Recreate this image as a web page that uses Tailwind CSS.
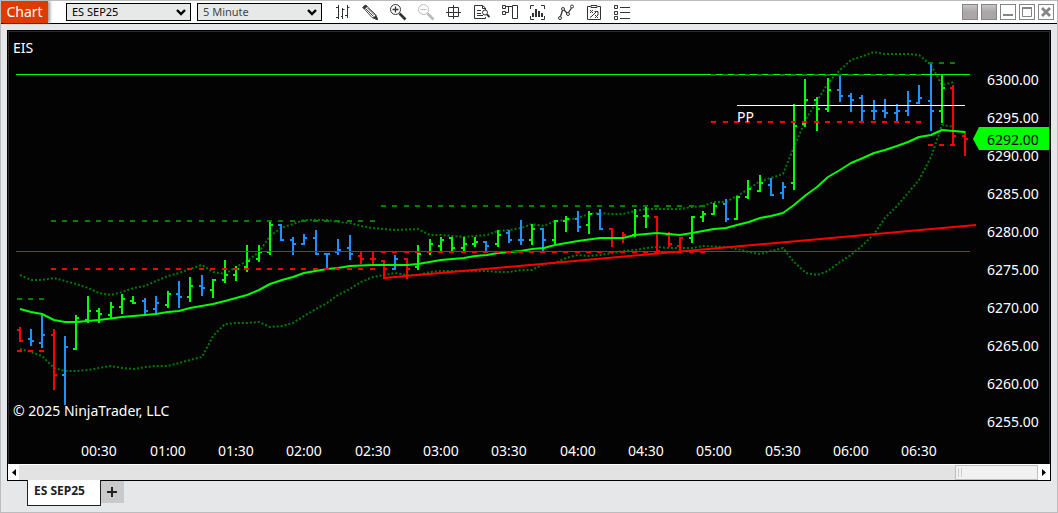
<!DOCTYPE html>
<html lang="en">
<head>
  <meta charset="UTF-8">
  <title>Chart - ES SEP25</title>
  <script src="https://cdn.jsdelivr.net/npm/@tailwindcss/browser@4"></script>
</head>
<body class="h-screen flex flex-col bg-[#e6e7e8] border border-[#bcbcbe] font-['Noto_Sans','Open_Sans',sans-serif] text-black overflow-hidden">

  <!-- Toolbar -->
  <header class="h-[23px] shrink-0 flex items-center bg-white border-b border-black pr-[3px]">
    <h1 class="h-full w-[47px] flex items-center justify-center bg-[#de3b00] text-white text-[14px] leading-none shadow-[2px_0_3px_#999]">Chart</h1>

    <div class="relative ml-[18px] w-[125px]">
      <select aria-label="Instrument" class="block appearance-none w-full h-[18px] pl-[5px] border border-black bg-[#e7e9e8] text-[11px] leading-4">
        <option>ES SEP25</option>
      </select>
      <svg class="absolute right-[5px] top-[6px] w-[10px] h-[7px] pointer-events-none" viewBox="0 0 10 7" fill="none" stroke="#000" stroke-width="2.4"><path d="M1 1l4 4 4-4"/></svg>
    </div>
    <div class="relative ml-[6px] w-[125px]">
      <select aria-label="Interval" class="block appearance-none w-full h-[18px] pl-[5px] border border-black bg-[#e7e9e8] text-[#444] text-[11px] leading-4">
        <option>5 Minute</option>
      </select>
      <svg class="absolute right-[5px] top-[6px] w-[10px] h-[7px] pointer-events-none" viewBox="0 0 10 7" fill="none" stroke="#000" stroke-width="2.4"><path d="M1 1l4 4 4-4"/></svg>
    </div>

    <nav class="ml-[11px] flex gap-[10px] text-[#333]">
      <button aria-label="Bar style">
        <svg class="size-[18px]" viewBox="0 0 18 18" fill="none" stroke="currentColor"><path d="M5.500 2v14M3 4.500h2M3 14.500h2M9.500 5v11M8 13.500h1M9.500 6.500h2M14.500 2v13M12 12.500h2M14.500 4.500h2"/></svg>
      </button>
      <button aria-label="Drawing tools">
        <svg class="size-[18px]" viewBox="0 0 18 18" fill="none" stroke="currentColor"><path d="M2 4.500L4.500 2l9.500 9 2.500 5.500-5.500-2zM5 6l7.500 7.500M6.500 5l7 7" stroke-width=".9"/><path d="M2 4.500L4.500 2l1.500 1.500L3.500 6zM12.500 15l4 1.500-1.500-4z" fill="currentColor"/></svg>
      </button>
      <button aria-label="Zoom in">
        <svg class="size-[18px]" viewBox="0 0 18 18" fill="none" stroke="currentColor"><circle cx="6.500" cy="6.500" r="5"/><path d="M3.500 6.500h6M6.500 3.500v6" stroke-width="1.300"/><path d="M10.500 10.500l6 6" stroke-width="2.600"/></svg>
      </button>
      <button aria-label="Zoom out" class="text-[#bbb]" disabled>
        <svg class="size-[18px]" viewBox="0 0 18 18" fill="none" stroke="currentColor"><circle cx="6.500" cy="6.500" r="5"/><path d="M3.500 6.500h6"/><path d="M10.500 10.500l6 6" stroke-width="2.600"/></svg>
      </button>
      <button aria-label="Crosshair">
        <svg class="size-[18px]" viewBox="0 0 18 18" fill="none" stroke="currentColor"><path d="M8.500 2v14M1 9.500h15M3.500 4.500h10v9h-10z"/></svg>
      </button>
      <button aria-label="Data box">
        <svg class="size-[18px]" viewBox="0 0 18 18" fill="none" stroke="currentColor"><path d="M12.500 7V5L9.500 2.500h-8v13h11v-1.500M9.500 2.500v3h3M4 7.500h4M4 10.500h4M4 12.500h6"/><circle cx="12" cy="9.500" r="2.500"/><path d="M14 11.500l2.500 2.500" stroke-width="1.800"/></svg>
      </button>
      <button aria-label="Chart trader">
        <svg class="size-[18px]" viewBox="0 0 18 18" fill="none" stroke="currentColor"><path d="M1.500 2.500h3v3h-3zM1.500 8.500h3v3h-3zM11.500 2.500h5v13h-5zM4.500 3.500h7M4.500 9.500h3v-6"/></svg>
      </button>
      <button aria-label="Indicators">
        <svg class="size-[18px]" viewBox="0 0 18 18" fill="none" stroke="currentColor"><path d="M5 2.500H1.500V6M12 2.500h3.500V6M5 16.500H1.500V13M12 16.500h3.500V13"/><path d="M4 14v-4M7 14V6M10 14V8M13 14v-4" stroke-width="2"/></svg>
      </button>
      <button aria-label="Strategies">
        <svg class="size-[18px]" viewBox="0 0 18 18" fill="none" stroke="currentColor"><circle cx="3" cy="15" r="1.500"/><circle cx="6" cy="6" r="1.500"/><circle cx="11" cy="11" r="1.500"/><circle cx="15" cy="3.500" r="1.500"/><path d="M3.500 13.500L5.500 7.500M7 7l3 3M11.500 9.500l3-4.500" stroke-width="1.300"/></svg>
      </button>
      <button aria-label="Strategy analyzer">
        <svg class="size-[18px]" viewBox="0 0 18 18" fill="none" stroke="currentColor"><path d="M5.500 3.500h-3v13h13v-13h-3M6 2.500h6v2H6z"/><path d="M5 7l3 3M8 7l-3 3M10 12l3 3M13 12l-3 3M5 14.500l2-1.500 4-4M9.500 8.500H13V12"/></svg>
      </button>
      <button aria-label="Properties">
        <svg class="size-[18px]" viewBox="0 0 18 18" fill="none" stroke="currentColor"><path d="M1.500 2.500h3v3h-3zM1.500 8.500h3v3h-3zM1.500 13.500h3v3h-3zM7 4.500h10M7 9.500h10M7 15.500h10"/></svg>
      </button>
    </nav>

    <div class="ml-auto flex gap-[3px]">
      <button aria-label="Link instrument" class="size-4 border border-[#858585] bg-linear-to-b from-[#c8c5c6] to-[#aaa6a7] to-50%"></button>
      <button aria-label="Link interval" class="size-4 border border-[#858585] bg-linear-to-b from-[#c8c5c6] to-[#aaa6a7] to-50%"></button>
      <button aria-label="Minimize" class="size-4 border border-[#858585]">
        <svg class="size-[14px]" viewBox="0 0 14 14"><path d="M2 9h10v2H2z" fill="#858585"/></svg>
      </button>
      <button aria-label="Maximize" class="size-4 border border-[#858585]">
        <svg class="size-[14px]" viewBox="0 0 14 14" fill="none" stroke="#858585"><path d="M2.500 3v8.500h9V3"/><path d="M2 3h10" stroke-width="2"/></svg>
      </button>
      <button aria-label="Close" class="size-4 border border-[#858585]">
        <svg class="size-[14px]" viewBox="0 0 14 14" stroke="#858585" stroke-width="2.800"><path d="M3 3l8 8M11 3l-8 8"/></svg>
      </button>
    </div>
  </header>

  <!-- Chart panel -->
  <main class="flex-1 min-h-0 flex flex-col mt-[6px] mx-[6px] border border-black">
    <div class="flex-1 min-h-0 bg-[#030303] border-t border-x border-[#2a2a2c]">
      <svg id="chart" class="block size-full" viewBox="9 32 1040 431" preserveAspectRatio="xMinYMin meet" fill="none">
        <g id="bands" stroke="#007a00" stroke-width="2" stroke-dasharray="2 2"></g>
        <g id="bars"></g>
        <polyline id="average" stroke="#00ff00" stroke-width="2" stroke-linejoin="round"/>
        <g id="levels" stroke-width="2"></g>
        <path d="M384 278L976 225" stroke="#ff0000" stroke-width="2"/>
        <path d="M16 251.500H970" stroke="#ff0000"/>
        <path d="M16 74.500H970" stroke="#00ff00"/>
        <g id="upperLevel" stroke-width="2"></g>
        <path d="M737 105.500H965" stroke="#ffffff"/>
        <g id="labels" class="text-[14px]" fill="#ffffff">
          <text x="13" y="53">EIS</text>
          <text x="737" y="122">PP</text>
          <text x="13" y="416">© 2025 NinjaTrader, LLC</text>
        </g>
        <path d="M973 139L979 127H1049V150H979z" fill="#00ff00"/>
        <text class="text-[14px]" x="987" y="145" fill="#000000">6292.00</text>
      </svg>
    </div>
    <!-- Scrollbar -->
    <div class="h-4 shrink-0 flex bg-[#e3e3e3] border-t border-white">
      <button aria-label="Scroll left" class="w-[11px] bg-white flex items-center justify-center">
        <svg class="w-[4px] h-[7px]" viewBox="0 0 4 7"><path d="M4 0v7L0 3.500z" fill="#000"/></svg>
      </button>
      <div class="ml-auto w-[83px] bg-[#f1f1f1] border border-[#bfbfbf] flex items-center gap-[2px] pl-[2px]">
        <span class="w-px h-[9px] bg-[#ccc]"></span>
        <span class="w-px h-[9px] bg-[#ccc]"></span>
      </div>
      <button aria-label="Scroll right" class="w-[12px] bg-white flex items-center justify-center">
        <svg class="w-[4px] h-[7px]" viewBox="0 0 4 7"><path d="M0 0v7l4-3.500z" fill="#000"/></svg>
      </button>
    </div>
  </main>

  <!-- Tabs -->
  <footer class="h-[31px] shrink-0 flex items-start pl-[26px]">
    <button class="-mt-px h-[26px] w-[74px] pl-[6px] pb-[4px] bg-white border border-t-0 border-[#222] text-[#222] text-[12px] text-left leading-none font-bold">ES SEP25</button>
    <button aria-label="Add tab" class="h-[22px] w-[23px] pr-px bg-[#cacaca] flex items-center justify-center">
      <svg class="size-[10px]" viewBox="0 0 10 10" stroke="#222" stroke-width="2"><path d="M5 0v10M0 5h10"/></svg>
    </button>
  </footer>

  <script>
    const $ = id => document.getElementById(id);
    const NS = 'http://www.w3.org/2000/svg';
    const COLORS = { r: '#ff0000', b: '#1e90ff', g: '#00ff00', d: '#008000' };

    function add(parent, tag, attrs) {
      const el = document.createElementNS(NS, tag);
      for (const key in attrs) el.setAttribute(key, attrs[key]);
      $(parent).appendChild(el);
      return el;
    }

    const barX = i => Math.floor(20 + i * 11.39);

    // color, high, low, open, close
    const bars = [
      ['r', 327, 342, 330, 341], ['b', 329, 346, 339, 341], ['b', 314, 348, 343, 335], ['r', 329, 390, 335, 375],
      ['b', 336, 405, 375, 347], ['g', 315, 350, 349, 318], ['g', 296, 323, 320, 311], ['g', 308, 323, 311, 314],
      ['g', 302, 319, 315, 307], ['g', 294, 314, 307, 299], ['g', 296, 304, 301, 303], ['b', 298, 314, 301, 311],
      ['b', 296, 314, 309, 303], ['g', 291, 308, 305, 294], ['b', 281, 308, 294, 297], ['g', 277, 302, 297, 286],
      ['b', 275, 296, 286, 288], ['g', 279, 298, 290, 280], ['g', 260, 283, 280, 275], ['g', 266, 281, 275, 269],
      ['g', 245, 272, 267, 261], ['g', 245, 262, 259, 252], ['g', 222, 255, 252, 225], ['b', 224, 241, 225, 240],
      ['b', 237, 255, 240, 244], ['b', 234, 245, 244, 238], ['b', 230, 255, 238, 254], ['b', 253, 269, 254, 254],
      ['b', 239, 255, 252, 250], ['b', 235, 260, 248, 254], ['r', 252, 264, 256, 259], ['r', 252, 264, 259, 259],
      ['r', 260, 279, 261, 269], ['b', 255, 270, 269, 259], ['r', 258, 279, 259, 269], ['g', 245, 270, 267, 254],
      ['g', 239, 255, 252, 244], ['g', 237, 251, 246, 240], ['g', 237, 252, 238, 248], ['g', 237, 251, 248, 244],
      ['g', 237, 247, 244, 242], ['b', 241, 251, 242, 246], ['g', 230, 247, 244, 235], ['b', 230, 243, 233, 240],
      ['b', 220, 245, 240, 240], ['g', 224, 245, 240, 229], ['b', 228, 251, 229, 240], ['g', 220, 245, 240, 221],
      ['g', 216, 232, 221, 219], ['b', 211, 232, 219, 227], ['g', 211, 234, 225, 214], ['b', 209, 230, 214, 229],
      ['r', 228, 247, 229, 238], ['r', 232, 243, 238, 235], ['g', 209, 237, 235, 216], ['g', 207, 228, 216, 216],
      ['r', 216, 252, 217, 251], ['r', 232, 247, 235, 244], ['r', 237, 252, 246, 238], ['g', 216, 243, 238, 217],
      ['g', 211, 222, 217, 214], ['g', 203, 215, 214, 206], ['b', 199, 222, 204, 219], ['g', 196, 220, 219, 197],
      ['g', 180, 199, 197, 189], ['g', 175, 192, 191, 183], ['b', 178, 196, 185, 195], ['b', 182, 199, 193, 187],
      ['g', 104, 190, 183, 126], ['g', 79, 127, 124, 100], ['g', 97, 131, 100, 109], ['g', 78, 112, 109, 90],
      ['b', 75, 102, 90, 96], ['b', 93, 112, 96, 100], ['b', 95, 121, 98, 111], ['b', 100, 120, 111, 111],
      ['b', 99, 118, 111, 113], ['b', 104, 121, 113, 111], ['b', 91, 116, 111, 101], ['b', 85, 104, 103, 98],
      ['b', 64, 131, 101, 111], ['g', 74, 123, 111, 88], ['r', 85, 146, 88, 136], ['r', 131, 156, 136, 139]
    ];

    bars.forEach(([color, high, low, open, close], i) => {
      const x = barX(i);
      add('bars', 'path', {
        d: `M${x} ${high}V${low}M${x - 3} ${open}H${x}M${x} ${close}H${x + 3}`,
        stroke: COLORS[color],
        'stroke-width': 2
      });
    });

    // Volatility bands
    const upper = '20,275 31,280 42,280 54,278 65,281 76,284 88,288 99,293 111,295 122,292 134,288 145,286 156,281 168,276 179,273 190,269 202,265 213,272 225,274 236,267 247,261 259,252 270,236 281,228 293,224 304,220 327,220 338,222 350,223 361,226 373,228 395,230 418,229 430,235 441,235 464,237 475,236 487,235 498,231 509,230 521,228 532,224 544,226 555,221 566,220 578,218 589,214 600,213 612,214 623,214 635,211 646,209 680,209 692,207 703,206 714,202 726,202 737,196 749,189 760,181 771,178 783,174 794,147 806,119 817,101 828,83 840,70 851,60 863,56 874,52 885,54 908,54 919,55 931,65 942,85 954,82';
    const lower = '20,349 31,352 42,356 54,368 65,371 76,371 88,370 99,368 111,366 122,368 134,369 145,367 156,366 168,366 179,363 190,360 202,357 213,336 225,324 236,323 247,323 259,322 270,327 282,326 293,323 304,316 316,309 327,303 338,295 350,289 361,282 373,277 384,275 395,273 407,275 418,275 430,272 441,271 487,271 498,272 509,272 521,270 532,270 544,264 555,263 566,258 578,255 589,256 600,255 612,253 623,251 635,250 646,248 657,247 669,248 692,248 703,246 726,247 737,249 749,252 760,254 771,251 783,248 794,262 806,273 817,275 828,271 840,262 851,255 863,245 874,234 885,218 897,206 908,193 919,180 931,157 942,125 954,127';
    add('bands', 'polyline', { points: upper });
    add('bands', 'polyline', { points: lower });

    $('average').setAttribute('points', '20,309 31,312 42,314 54,320 65,322 76,322 99,320 122,317 145,315 156,314 168,312 179,311 190,308 213,304 225,301 247,295 259,290 270,284 282,280 293,277 304,273 327,269 338,268 350,266 373,265 407,265 418,264 441,260 464,258 475,256 487,255 498,253 521,251 532,249 544,248 555,245 578,241 600,238 623,238 635,235 657,233 680,235 692,233 714,229 726,228 737,225 749,222 760,218 771,216 783,213 794,205 806,195 817,187 828,177 840,170 851,163 863,158 874,153 885,150 897,146 908,142 919,137 931,135 942,130 965,132');

    // Session levels, one dash under each bar
    function level(group, from, to, y, color) {
      for (let i = from; i <= to; i++) {
        add(group, 'path', { d: `M${barX(i) - 3} ${y}h5`, stroke: COLORS[color] });
      }
    }
    level('levels', 0, 2, 299, 'd');
    level('levels', 0, 2, 351, 'r');
    level('levels', 3, 31, 221, 'd');
    level('levels', 3, 31, 269, 'r');
    level('levels', 32, 60, 206, 'd');
    level('levels', 32, 60, 252, 'r');
    level('upperLevel', 61, 79, 75, 'd');
    level('levels', 61, 79, 122, 'r');
    level('levels', 80, 82, 63, 'd');
    level('levels', 80, 82, 145, 'r');

    // Price axis
    for (let i = 0; i < 10; i++) {
      add('labels', 'text', { x: 987, y: 85 + i * 38 }).textContent = (6300 - i * 5).toFixed(2);
    }

    // Time axis
    for (let i = 0; i < 13; i++) {
      const minutes = 30 + i * 30;
      const hh = String(Math.floor(minutes / 60)).padStart(2, '0');
      const mm = String(minutes % 60).padStart(2, '0');
      add('labels', 'text', { x: barX(7 + i * 6), y: 456, 'text-anchor': 'middle' }).textContent = `${hh}:${mm}`;
    }
  </script>
</body>
</html>
